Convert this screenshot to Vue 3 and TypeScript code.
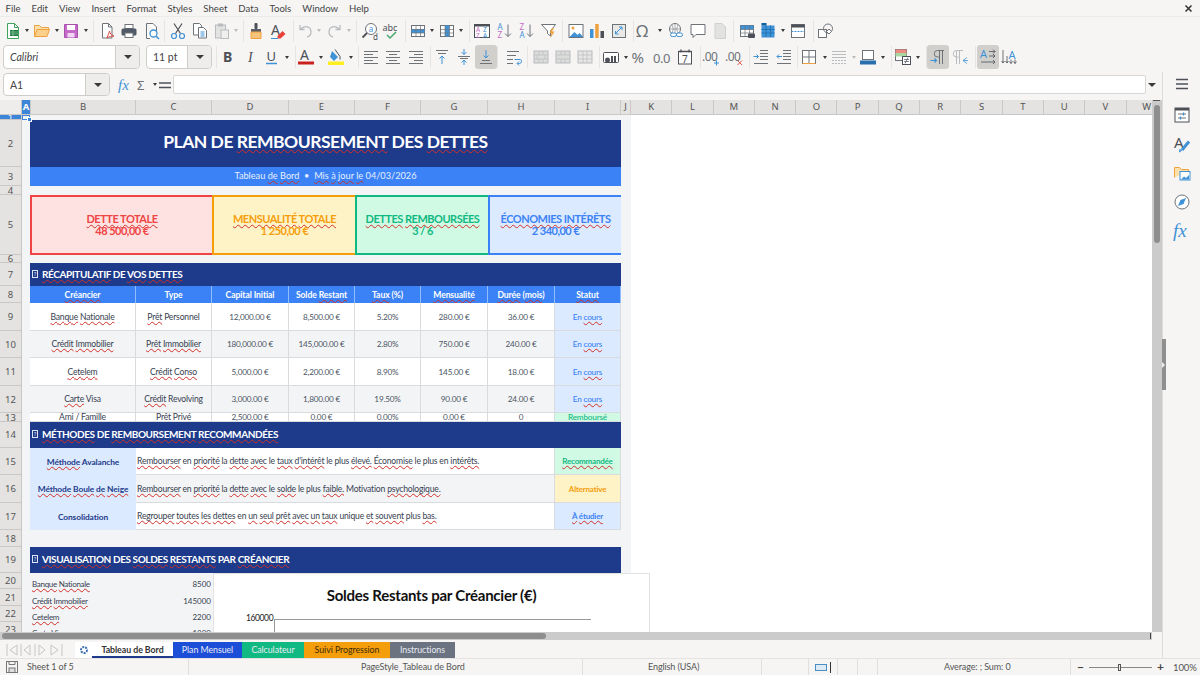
<script setup lang="ts">
// LibreOffice Calc window: toolbars are data, icon art lives in one map
interface BarItem {
  x: number
  k?: 'a' | 's' | 'box'
  ic?: string
  on?: boolean
  off?: boolean
  w?: number
  text?: string
  italic?: boolean
}

interface Cell {
  col: number
  span?: number
  text: string
  cls: string
}

const G = '#6e7378'
const B = '#3f92d6'
const O = '#eea23f'
const D = '#4d5157'
const L = '#b9bcbf'
const T = (s: string, x: number, y: number, size: number, fill: string, extra = '') =>
  `<text x="${x}" y="${y}" font-size="${size}" fill="${fill}" font-family="Noto Sans" ${extra}>${s}</text>`
const lines = (rows: number[][], c = G) =>
  `<path d="${rows.map(r => `M${r[0]} ${r[2]}H${r[1]}`).join('')}" stroke="${c}" fill="none"/>`
const table = (extra: string) =>
  `<rect x="2.5" y="3.5" width="13" height="11" fill="#fff" stroke="${G}"/>${extra}<path d="M2.5 7.5h13M2.5 11h13M7 3.5v11M11.5 3.5v11" stroke="${G}" stroke-width=".7"/>`

const icons: Record<string, string> = {
  new: `<path d="M3.5 1.5h7l4 4v11h-11z" fill="#fff" stroke="#3ea65c"/><path d="M10.5 1.5v4h4" fill="none" stroke="#3ea65c"/><rect x="6" y="8" width="8" height="6" fill="#1d7b3f"/><path d="M6 10h8M6 12h8M9 8v6" stroke="#a9dcb8" stroke-width=".6"/>`,
  open: `<path d="M1.5 14.5v-11h5l2 2h7v3" fill="#fbe0ac" stroke="${O}"/><path d="M1.5 14.5l2.5-7h12.5l-2.5 7z" fill="#fad08a" stroke="${O}"/>`,
  save: `<path d="M2.5 2.5h13v13h-13z" fill="#c56ac8" stroke="#a94fae"/><rect x="5" y="3" width="8" height="5" fill="#fff"/><rect x="5.5" y="11" width="7" height="4.5" fill="#f2d6f3"/>`,
  pdf: `<path d="M4.5 1.5h6l3.5 3.5v11h-9.500z" fill="#fff" stroke="${G}"/><path d="M10.500 1.500v3.500h3.500" fill="none" stroke="${G}"/><path d="M9 16c1-3 2-5 2.500-7 .5 3 2 4 4.500 5-2 0-5 .5-7 2z" fill="none" stroke="#dc4b42"/>`,
  print: `<rect x="5" y="2.500" width="8" height="4" fill="#fff" stroke="${G}"/><rect x="1.500" y="6.500" width="15" height="7" rx="1.500" fill="#4f5a66"/><rect x="5" y="11" width="8" height="4.500" fill="#fff" stroke="${G}"/>`,
  preview: `<path d="M3.500 1.500h6.500l3.500 3.500v4M7 16.500h-3.500v-15" fill="#fff" stroke="${G}"/><circle cx="10.500" cy="11.500" r="3.500" fill="#fff" stroke="${B}" stroke-width="1.300"/><path d="M13 14l3 3" stroke="${B}" stroke-width="1.500"/>`,
  cut: `<path d="M5 1.500l6.500 10M13 1.500l-6.500 10" stroke="${D}" stroke-width="1.200"/><circle cx="5" cy="14" r="2.500" fill="none" stroke="${B}" stroke-width="1.200"/><circle cx="13" cy="14" r="2.500" fill="none" stroke="${B}" stroke-width="1.200"/>`,
  copy: `<path d="M2.500 1.500h6l2 2v9.500h-8z" fill="#fff" stroke="${G}"/><path d="M7.500 5.500h5l3 3v7.500h-8z" fill="#fff" stroke="${G}"/><path d="M9.500 10h4M9.500 12h4M9.500 14h4" stroke="${B}"/>`,
  paste: `<rect x="2.500" y="3" width="10" height="13" fill="#e3e3e1" stroke="${L}"/><rect x="5" y="1.500" width="5" height="3" fill="${L}"/><rect x="8" y="8" width="7.500" height="8.500" fill="#efefed" stroke="${L}"/>`,
  clone: `<rect x="7.500" y="1" width="3" height="6" rx="1" fill="${D}"/><rect x="4" y="7" width="10" height="3" fill="#5a5f66"/><path d="M4 10h10v6.500h-10z" fill="#f6c37a" stroke="${O}"/>`,
  clear: `${T('A', 2, 13, 14, D)}<path d="M8.500 14l5-5 3 3-5 4.500h-3z" fill="#e8413c"/><path d="M2 16.500h7" stroke="${B}"/>`,
  undo: `<path d="M4 7.500c5-5 11-3 11 2.500 0 3-2 4.500-4 5M4 3v4.500h4.500" fill="none" stroke="${L}" stroke-width="1.300"/>`,
  redo: `<path d="M14 7.500c-5-5-11-3-11 2.500 0 3 2 4.500 4 5M14 3v4.500h-4.500" fill="none" stroke="${L}" stroke-width="1.300"/>`,
  find: `<circle cx="10" cy="7" r="5.500" fill="#fff" stroke="${G}"/><path d="M6 11l-4.500 4.500" stroke="${D}" stroke-width="1.800"/>${T('a', 7.800, 9.500, 8, B)}${T('d', 12, 17.500, 8, D)}`,
  spell: `${T('abc', .5, 9, 9, D)}<path d="M5 13l3 3 6-6" fill="none" stroke="#46a86b" stroke-width="1.500"/>`,
  rows: table(`<rect x="2.500" y="7" width="13" height="4" fill="${B}"/>`),
  cols: table(`<rect x="7" y="3.500" width="4.500" height="11" fill="${B}"/>`),
  sort: `<rect x="1.500" y="2.500" width="15" height="13" fill="#fff" stroke="${D}"/><rect x="1.500" y="2.500" width="15" height="2" fill="${D}"/>${T('A', 3, 10, 6.500, '#c66bc9')}${T('Z', 3, 15.500, 6.500, '#c66bc9')}${T('Z', 10, 10, 6.500, B)}${T('A', 10, 15.500, 6.500, B)}`,
  az: `${T('A', 1.500, 8, 8, B)}${T('Z', 1.500, 16, 8, '#c66bc9')}<path d="M12 2.500v12M9 11.500l3 3 3-3" fill="none" stroke="${G}"/>`,
  za: `${T('Z', 1.500, 8, 8, '#c66bc9')}${T('A', 1.500, 16, 8, B)}<path d="M12 2.500v12M9 11.500l3 3 3-3" fill="none" stroke="${G}"/>`,
  filter: `<path d="M1.500 2.500h14l-5 6.500v5l-3-2.500v-2.500z" fill="#fff" stroke="${G}"/><path d="M12 6l-2.500 5h2l-1 5 4-6.500h-2.500l2-3.500z" fill="${O}"/>`,
  image: `<rect x="2" y="2.500" width="14" height="13" fill="#fff" stroke="${G}"/><circle cx="6" cy="6" r="1.500" fill="${O}"/><path d="M2.500 15l5-5 3 3 2-2 3 3v1h-13z" fill="${B}"/>`,
  chart: `<rect x="2" y="7" width="3.500" height="9" fill="${B}"/><rect x="7.200" y="2" width="3.500" height="14" fill="${O}"/><rect x="12.500" y="9" width="3.500" height="7" fill="${D}"/>`,
  pivot: `<rect x="2.500" y="2.500" width="13" height="13" fill="#e8e8e6" stroke="${G}"/><path d="M5 12l7-7M9 5h3v3M5.500 9v3h3" fill="none" stroke="${B}"/>`,
  omega: T('Ω', 0, 15, 17, G),
  link: `<circle cx="8" cy="7" r="5.500" fill="#fff" stroke="${G}"/><path d="M2.500 7h11M8 1.500v11M5 3c1.500 2.500 1.500 5.500 0 8M11 3c-1.500 2.500-1.500 5.500 0 8" fill="none" stroke="${G}" stroke-width=".6"/><rect x="3.500" y="11" width="6" height="3.500" rx="1.700" fill="#fff" stroke="${B}"/><rect x="9.500" y="11" width="6" height="3.500" rx="1.700" fill="#fff" stroke="${B}"/>`,
  comment: `<path d="M2 2.500h14v10h-9l-3 3v-3h-2z" fill="#fff" stroke="${G}"/>`,
  hdr: `<path d="M4 1.500h7l3.500 3.500v11.500h-10.500z" fill="#e2e2e0" stroke="#d0d0ce"/>`,
  prange: `${table(`<rect x="2.500" y="3.500" width="13" height="4" fill="${B}"/>`)}<rect x="10" y="11.500" width="7" height="4.500" rx="1" fill="${D}"/>`,
  named: `<rect x="2.500" y="3.500" width="13" height="12" fill="${B}"/><path d="M2.500 7.500h13M2.500 11h13M7 3.500v12M11.500 3.500v12" stroke="#0f5f9d" stroke-dasharray="1 1"/><rect x="2.500" y="1" width="5" height="2.500" fill="#0f5f9d"/>`,
  freeze: `<rect x="2.500" y="2.500" width="13" height="13" fill="#fff" stroke="${G}"/><rect x="2.500" y="2.500" width="13" height="3" fill="${D}"/><path d="M2.500 9.500h13" stroke="${B}" stroke-dasharray="2 1"/>`,
  shapes: `<rect x="1.500" y="7.500" width="8" height="8" fill="#fff" stroke="${G}"/><circle cx="11" cy="6.500" r="4.500" fill="none" stroke="${G}"/><path d="M12 7l2.500 2.500-2.500 2.500-2.500-2.500z" fill="#fff" stroke="${G}"/>`,
  bold: T('B', 4, 14, 14, D, 'font-weight="700"'),
  ital: `<text x="6" y="14" font-size="14" fill="${D}" font-family="Liberation Serif" font-style="italic">I</text>`,
  under: `${T('U', 3.500, 12.500, 13, D)}<path d="M3 15.500h11" stroke="${B}" stroke-width="1.500"/>`,
  color: `${T('A', 3, 12, 14, D)}<rect x="1" y="13.500" width="16" height="3" fill="#c9211e"/>`,
  bg: `<path d="M5 3l6 6-4 4-4-4z" fill="${B}"/><path d="M8 1.500l5 7v3" fill="none" stroke="${D}"/><rect x="1" y="13.500" width="16" height="3.500" fill="#ffee22"/>`,
  left: lines([[2, 16, 3.500], [2, 11, 6.500], [2, 16, 9.500], [2, 11, 12.500], [2, 16, 15.500]]),
  center: lines([[2, 16, 3.500], [5, 13, 6.500], [2, 16, 9.500], [5, 13, 12.500], [2, 16, 15.500]]),
  right: lines([[2, 16, 3.500], [7, 16, 6.500], [2, 16, 9.500], [7, 16, 12.500], [2, 16, 15.500]]),
  vtop: `${lines([[3, 15, 2.500], [5, 13, 5.500]])}<path d="M9 16v-8M6.500 10.500l2.500-2.500 2.500 2.500" fill="none" stroke="${B}"/>`,
  vmid: `${lines([[3, 15, 8.500], [5, 13, 10.500]])}<path d="M9 1v5.500M6.500 4l2.500 2.500 2.500-2.500M9 17v-5M6.500 14.500l2.500-2.500 2.500 2.500" fill="none" stroke="${B}"/>`,
  vbot: `${lines([[5, 13, 12.500], [3, 15, 15.500]])}<path d="M9 2v8M6.500 7.500l2.500 2.500 2.500-2.500" fill="none" stroke="${B}"/>`,
  wrap: `${lines([[2, 14, 3.500], [2, 11, 7.500], [2, 8, 11.500], [2, 8, 15.500]])}<path d="M9.500 11.500h6c1.500 0 1.500 4-1 4h-2M14 13.500l-2 2 2 2" fill="none" stroke="${B}"/>`,
  merge: `<rect x="2" y="3" width="14" height="12" fill="#dcdcda" stroke="${L}"/><path d="M2 7h14M2 11h14M7 3v4M11 3v4M5 7v4M13 7v4M7 11v4M11 11v4" stroke="${L}" stroke-width=".7"/>`,
  merge2: `<rect x="2" y="3" width="14" height="12" fill="#dcdcda" stroke="${L}"/><path d="M2 7h14M2 11h14M7 3v4M11 3v4M7 11v4M11 11v4" stroke="${L}" stroke-width=".7"/>`,
  merge3: `<rect x="2" y="3" width="14" height="12" fill="#e6e6e4" stroke="${L}"/><path d="M2 7h14M2 11h14M7 3v12M11 3v12" stroke="${L}" stroke-width=".7"/>`,
  money: `<rect x="1.500" y="4.500" width="15" height="10" rx="1" fill="#fff" stroke="${D}"/><circle cx="5.500" cy="12" r="2.500" fill="${D}"/><rect x="9" y="8" width="2" height="6" fill="${D}"/><rect x="12" y="8" width="2" height="6" fill="${D}"/>`,
  pct: T('%', -.5, 14.500, 15, G),
  num: T('0.0', -1, 14.500, 13, G, 'letter-spacing="-.5"'),
  date: `<rect x="2.500" y="3.500" width="13" height="12.500" fill="#fff" stroke="${D}"/><path d="M2.500 3.500h13M5 1.500v3M13 1.500v3" stroke="${D}" stroke-width="1.300"/>${T('7', 6, 14.500, 10, D)}`,
  adddec: `${T('.00', -1, 13, 12, G, 'letter-spacing="-.5"')}<path d="M13.500 12.500v5M11 15h5" stroke="${B}"/>`,
  deldec: `${T('.00', -1, 13, 12, G, 'letter-spacing="-.5"')}<path d="M11.500 12.500l4.500 4.500M16 12.500l-4.500 4.500" stroke="#e2574c"/>`,
  indent: `${lines([[8, 16, 2.500], [8, 16, 5.500], [8, 16, 8.500], [8, 16, 11.500], [2, 16, 15.500]])}<path d="M1.500 8.500h5M4.500 6.500l2 2-2 2" fill="none" stroke="${B}"/>`,
  outdent: `${lines([[8, 16, 2.500], [8, 16, 5.500], [8, 16, 8.500], [8, 16, 11.500], [2, 16, 15.500]])}<path d="M7 8.500h-5M4 6.500l-2 2 2 2" fill="none" stroke="${B}"/>`,
  borders: `<rect x="2.500" y="2.500" width="13" height="13" fill="#fff" stroke="${G}"/><path d="M9 2.500v13M2.500 9h13" stroke="${G}"/><path d="M2.500 15.500h13" stroke="${O}"/>`,
  lstyle: `<path d="M2 3.500h14M2 6.500h14M2 9.500h14" stroke="${L}"/><path d="M2 12.500h14M2 15.500h14" stroke="${L}" stroke-dasharray="2 1"/>`,
  bcolor: `<rect x="3.500" y="2.500" width="11" height="9" fill="#fff" stroke="${G}"/><rect x="1" y="12.500" width="16" height="4" fill="#2a6fad"/>`,
  cond: `<rect x="1.500" y="1.500" width="11" height="11" fill="#fff" stroke="${G}"/><rect x="1.500" y="1.500" width="11" height="3.500" fill="#ef8a80"/><rect x="1.500" y="5" width="11" height="3.500" fill="#a8d8a0"/><rect x="8.500" y="8.500" width="8" height="8" fill="#fff" stroke="${D}"/><path d="M10 11.500h5M10 13.500h5M11 15.500l3-6" stroke="${D}" stroke-width=".7"/>`,
  ltr: `<path d="M10.500 16v-13M13.500 16v-13M15 2.500h-6.500a3.200 3.200 0 0 0 0 6.500h2" fill="none" stroke="${G}"/><path d="M1.500 12.500h6M5.500 10.500l2 2-2 2" fill="none" stroke="${B}" stroke-width="1.200"/>`,
  rtl: `<path d="M5.500 16v-13M8.500 16v-13M12 2.500h-6.500a3.200 3.200 0 0 0 0 6.500h2" fill="none" stroke="${L}"/><path d="M12 12.500l4-3M12 12.500l4 3M12 12.500h5" fill="none" stroke="${B}" stroke-width=".8"/>`,
  horiz: `${T('A', 1, 10, 11, B)}<path d="M10 3.500h6M14 1.500l2 2-2 2M10 8h6M14 6l2 2-2 2M2 14h14M14 12l2 2-2 2" fill="none" stroke="${D}" stroke-width=".8"/>`,
  vert: `${T('A', 8.500, 10.500, 11, B)}<path d="M3 2v13M1.500 13l1.500 2 1.500-2M7 8v7M5.500 13l1.500 2 1.500-2M11 11.500v4M9.500 13.500l1.500 2 1.500-2M15 11.500v4M13.500 13.500l1.500 2 1.500-2" fill="none" stroke="${D}" stroke-width=".8"/>`,
  props: `<rect x="2" y="2" width="14" height="14" fill="#fff" stroke="${D}"/><rect x="2" y="2" width="14" height="2.500" fill="${D}"/><path d="M5 8h8M5 12h8" stroke="${G}"/><path d="M10.500 6.500v3M7.500 10.500v3" stroke="${B}" stroke-width="1.300"/>`,
  styles: `${T('A', 1, 13, 15, D)}<path d="M9 15l7-8.500" stroke="${B}" stroke-width="3"/><path d="M9 15l-2.500 2 .5-3" fill="#8fc1e8" stroke="${B}"/>`,
  gallery: `<path d="M1.500 13.500v-10h5l2 2h7v2" fill="#fbe0ac" stroke="${O}"/><rect x="7" y="7.500" width="10" height="8.500" fill="#fff" stroke="${B}"/><path d="M8 15.500l3-3 2 1.500 3-3v4.500z" fill="${B}"/>`,
  navig: `<circle cx="9" cy="9" r="7" fill="#fff" stroke="${G}"/><path d="M13 5l-2.500 6-5.500 2 2.500-6z" fill="${B}"/>`,
  fx: `<text x="1" y="14" font-size="15" fill="${B}" font-family="Liberation Serif" font-style="italic">fx</text>`,
  fxbig: `<text x="0" y="15" font-size="19" fill="${B}" font-family="Liberation Serif" font-style="italic">fx</text>`,
  sigma: T('Σ', 3, 14, 13, G),
  eq: `<path d="M3 7h12M3 11.500h12" stroke="${D}" stroke-width="1.500"/>`,
  burger: `<path d="M3 4.500h12M3 9h12M3 13.500h12" stroke="${D}" stroke-width="1.400"/>`,
  floppy: `<rect x="1.500" y="1.500" width="11" height="11" fill="none" stroke="#777"/><rect x="4" y="8" width="6" height="4.500" fill="#ddd" stroke="#777"/><path d="M4 1.500v3h6v-3" fill="none" stroke="#777"/>`
}

const bar = (items: BarItem[]) => {
  let end = 0
  return items.map(it => {
    const w = it.w ?? (it.k === 'a' ? 7 : it.k === 's' ? 1 : 22)
    const ml = it.x - w / 2 - end
    end = it.x + w / 2
    return { ...it, style: { width: `${w}px`, marginLeft: `${ml}px` } }
  })
}

const menu = ['File', 'Edit', 'View', 'Insert', 'Format', 'Styles', 'Sheet', 'Data', 'Tools', 'Window', 'Help']

const bar1 = bar([
  { x: 13, ic: 'new' }, { x: 27, k: 'a' }, { x: 42, ic: 'open' }, { x: 57, k: 'a' }, { x: 71, ic: 'save' }, { x: 86, k: 'a' }, { x: 93, k: 's' },
  { x: 107, ic: 'pdf' }, { x: 129, ic: 'print' }, { x: 152, ic: 'preview' }, { x: 164, k: 's' },
  { x: 178, ic: 'cut' }, { x: 200, ic: 'copy' }, { x: 222, ic: 'paste' }, { x: 236, k: 'a', off: true }, { x: 243, k: 's' },
  { x: 256, ic: 'clone' }, { x: 278, ic: 'clear' }, { x: 293, k: 's' },
  { x: 305, ic: 'undo' }, { x: 319, k: 'a', off: true }, { x: 335, ic: 'redo' }, { x: 349, k: 'a', off: true }, { x: 356, k: 's' },
  { x: 370, ic: 'find' }, { x: 391, ic: 'spell' }, { x: 405, k: 's' },
  { x: 418, ic: 'rows' }, { x: 432, k: 'a' }, { x: 447, ic: 'cols' }, { x: 461, k: 'a' }, { x: 469, k: 's' },
  { x: 482, ic: 'sort' }, { x: 505, ic: 'az' }, { x: 527, ic: 'za' }, { x: 549, ic: 'filter' }, { x: 562, k: 's' },
  { x: 576, ic: 'image' }, { x: 597, ic: 'chart' }, { x: 619, ic: 'pivot' }, { x: 633, k: 's' },
  { x: 645, ic: 'omega' }, { x: 660, k: 'a' }, { x: 676, ic: 'link' }, { x: 698, ic: 'comment' }, { x: 720, ic: 'hdr' }, { x: 733, k: 's' },
  { x: 747, ic: 'prange' }, { x: 768, ic: 'named' }, { x: 783, k: 'a' }, { x: 798, ic: 'freeze' }, { x: 813, k: 's' },
  { x: 826, ic: 'shapes' }
])

const bar2 = bar([
  { x: 71.5, k: 'box', w: 137, text: 'Calibri', italic: true }, { x: 179, k: 'box', w: 66, text: '11 pt' }, { x: 216, k: 's' },
  { x: 228, ic: 'bold' }, { x: 251, ic: 'ital' }, { x: 272, ic: 'under' }, { x: 287, k: 'a' }, { x: 295, k: 's' },
  { x: 306, ic: 'color' }, { x: 321, k: 'a' }, { x: 336, ic: 'bg' }, { x: 351, k: 'a' }, { x: 358, k: 's' },
  { x: 371, ic: 'left' }, { x: 393, ic: 'center' }, { x: 416, ic: 'right' }, { x: 430, k: 's' },
  { x: 442, ic: 'vtop' }, { x: 464, ic: 'vmid' }, { x: 486, ic: 'vbot', on: true }, { x: 497.5, k: 's' },
  { x: 514, ic: 'wrap' }, { x: 527, k: 's' },
  { x: 541, ic: 'merge' }, { x: 563, ic: 'merge2' }, { x: 585, ic: 'merge3' }, { x: 599, k: 's' },
  { x: 611, ic: 'money' }, { x: 626, k: 'a' }, { x: 641, ic: 'pct' }, { x: 663, ic: 'num' }, { x: 685, ic: 'date' }, { x: 700, k: 's' },
  { x: 712, ic: 'adddec' }, { x: 735, ic: 'deldec' }, { x: 749, k: 's' },
  { x: 761, ic: 'indent' }, { x: 784, ic: 'outdent' }, { x: 797, k: 's' },
  { x: 809, ic: 'borders' }, { x: 825, k: 'a' }, { x: 839, ic: 'lstyle' }, { x: 854, k: 'a', off: true }, { x: 868, ic: 'bcolor' }, { x: 883, k: 'a' }, { x: 891, k: 's' },
  { x: 903, ic: 'cond' }, { x: 918, k: 'a' }, { x: 926, k: 's' },
  { x: 938, ic: 'ltr', on: true }, { x: 960, ic: 'rtl' }, { x: 975, k: 's' },
  { x: 988, ic: 'horiz', on: true }, { x: 1009, ic: 'vert' }
])

// column letters with the sheet's real widths
const cols: [string, number][] = [
  ['A', 9], ['B', 105], ['C', 76], ['D', 77], ['E', 66], ['F', 66], ['G', 67], ['H', 67], ['I', 66], ['J', 10],
  ['K', 41.3], ['L', 41.3], ['M', 41.3], ['N', 41.3], ['O', 41.3], ['P', 41.3], ['Q', 41.3], ['R', 41.3], ['S', 41.3], ['T', 41.3], ['U', 41.3], ['V', 41.3], ['W', 41.3]
]

const rowHeights = [5, 47, 19, 9, 60, 8, 23, 17, 28, 27, 28, 27, 9, 26, 27, 28, 27, 17, 26, 16, 17, 16, 16]

// ~word~ = word the spell checker flags
const parts = (s: string) =>
  s.split(/(~[^~]+~)/).filter(Boolean).map(p => ({ t: p.replace(/~/g, ''), bad: p.startsWith('~') }))

const R = (row: number, c: Cell) => ({ ...c, row })
const cells: (Cell & { row: number })[] = [
  R(2, { col: 3, span: 8, text: 'PLAN DE ~REMBOURSEMENT~ DES ~DETTES~', cls: 'title' }),
  R(3, { col: 3, span: 8, text: 'Tableau ~de~ ~Bord~  •  ~Mis~ ~à~ ~jour~ ~le~ 04/03/2026', cls: 'sub' }),
  R(5, { col: 3, span: 2, text: '~DETTE~ ~TOTALE~|48 500,00 €', cls: 'kpi red' }),
  R(5, { col: 5, span: 2, text: '~MENSUALITÉ~ ~TOTALE~|1 250,00 €', cls: 'kpi amber' }),
  R(5, { col: 7, span: 2, text: '~DETTES~ ~REMBOURSÉES~|3 / 6', cls: 'kpi green' }),
  R(5, { col: 9, span: 2, text: '~ÉCONOMIES~ ~INTÉRÊTS~|2 340,00 €', cls: 'kpi blue' }),
  R(7, { col: 3, span: 8, text: '~RÉCAPITULATIF~ DE ~VOS~ ~DETTES~', cls: 'section' }),
  R(14, { col: 3, span: 8, text: '~MÉTHODES~ DE ~REMBOURSEMENT~ ~RECOMMANDÉES~', cls: 'section' }),
  R(19, { col: 3, span: 8, text: '~VISUALISATION~ DES ~SOLDES~ ~RESTANTS~ PAR ~CRÉANCIER~', cls: 'section' })
]

const heads = ['~Créancier~', 'Type', 'Capital Initial', 'Solde ~Restant~', '~Taux~ (%)', '~Mensualité~', '~Durée~ (~mois~)', '~Statut~']
heads.forEach((text, i) => cells.push(R(8, { col: 3 + i, text, cls: 'head' })))

const debts = [
  ['~Banque~ ~Nationale~', '~Prêt~ Personnel', '12,000.00 €', '8,500.00 €', '5.20%', '280.00 €', '36.00 €', 'En ~cours~'],
  ['~Crédit~ ~Immobilier~', '~Prêt~ ~Immobilier~', '180,000.00 €', '145,000.00 €', '2.80%', '750.00 €', '240.00 €', 'En ~cours~'],
  ['~Cetelem~', '~Crédit~ ~Conso~', '5,000.00 €', '2,200.00 €', '8.90%', '145.00 €', '18.00 €', 'En ~cours~'],
  ['~Carte~ Visa', '~Crédit~ Revolving', '3,000.00 €', '1,800.00 €', '19.50%', '90.00 €', '24.00 €', 'En ~cours~'],
  ['Ami / ~Famille~', '~Prêt~ ~Privé~', '2,500.00 €', '0.00 €', '0.00%', '0.00 €', '0', '~Remboursé~']
]
debts.forEach((row, r) => {
  row.forEach((text, i) => {
    const stat = i === 7 ? (r === 4 ? ' st-green' : ' st-blue') : ''
    cells.push(R(9 + r, { col: 3 + i, text, cls: `td${r % 2 ? ' alt' : ''}${i > 1 ? ' num' : ''}${stat}` }))
  })
})

const methods = [
  ['~Méthode~ Avalanche', '~Rembourser~ en ~priorité~ la ~dette~ ~avec~ le ~taux~ ~d\'intérêt~ le plus ~élevé.~ ~Économise~ le plus en ~intérêts.~', '~Recommandée~', 'st-green'],
  ['~Méthode~ ~Boule~ ~de~ ~Neige~', '~Rembourser~ en ~priorité~ la ~dette~ ~avec~ le ~solde~ le plus ~faible.~ Motivation ~psychologique.~', 'Alternative', 'st-amber'],
  ['Consolidation', '~Regrouper~ ~toutes~ ~les~ ~dettes~ en ~un~ ~seul~ ~prêt~ ~avec~ ~un~ ~taux~ unique ~et~ ~souvent~ plus ~bas.~', '~À~ ~étudier~', 'st-blue']
]
methods.forEach((m, r) => {
  const alt = r === 1 ? ' alt' : ''
  cells.push(R(15 + r, { col: 3, text: m[0], cls: 'method' }))
  cells.push(R(15 + r, { col: 4, span: 6, text: m[1], cls: `desc td${alt}` }))
  cells.push(R(15 + r, { col: 10, text: m[2], cls: `td strong ${m[3]}` }))
})

const balances = [['~Banque~ ~Nationale~', '8500'], ['~Crédit~ ~Immobilier~', '145000'], ['~Cetelem~', '2200'], ['~Carte~ Visa', '1800']]
balances.forEach((b, r) => {
  cells.push(R(20 + r, { col: 3, text: b[0], cls: 'plain' }))
  cells.push(R(20 + r, { col: 4, text: b[1], cls: 'plain right' }))
})

const tabs = [
  { name: 'Tableau de Bord', cls: 'current', w: 81 },
  { name: 'Plan Mensuel', cls: 'plan', w: 69 },
  { name: 'Calculateur', cls: 'calc', w: 62 },
  { name: 'Suivi Progression', cls: 'suivi', w: 86 },
  { name: 'Instructions', cls: 'instr', w: 65 }
]

const deck = ['props', 'styles', 'gallery', 'navig', 'fxbig']
</script>

<template>
  <div class="app">
    <div class="menubar">
      <span v-for="m in menu" :key="m">{{ m }}</span>
      <svg class="close" width="9" height="9" viewBox="0 0 9 9"><path d="M1.500 1.500l6 6M7.500 1.500l-6 6" stroke="#333" stroke-width="1.500" /></svg>
    </div>

    <div v-for="(items, n) in [bar1, bar2]" :key="n" class="bar" :class="n ? 'bar-two' : 'bar-one'">
      <template v-for="it in items" :key="it.x">
        <div v-if="it.k === 'box'" class="combo" :style="it.style">
          <span class="combo-text" :class="{ italic: it.italic }">{{ it.text }}</span>
          <span class="combo-btn"><i class="tri" /></span>
        </div>
        <span v-else-if="it.k === 's'" class="sep" :style="it.style" />
        <span v-else-if="it.k === 'a'" class="arrow" :style="it.style"><i class="tri small" :class="{ off: it.off }" /></span>
        <span v-else class="tool" :class="{ on: it.on }" :style="it.style">
          <svg width="18" height="18" viewBox="0 0 18 18" v-html="icons[it.ic!]" />
        </span>
      </template>
    </div>

    <div class="workspace">
      <div class="doc">
        <div class="formula">
          <div class="combo namebox">
            <span class="combo-text">A1</span>
            <span class="combo-btn"><i class="tri" /></span>
          </div>
          <span class="sep fsep" />
          <svg class="f-ic" width="18" height="18" viewBox="0 0 18 18" v-html="icons.fx" />
          <svg class="f-ic sig" width="18" height="18" viewBox="0 0 18 18" v-html="icons.sigma" />
          <i class="tri small f-tri" />
          <svg class="f-ic eq" width="18" height="18" viewBox="0 0 18 18" v-html="icons.eq" />
          <div class="finput" />
          <i class="tri f-drop" />
        </div>

        <div class="sheetrow">
          <div class="sheet">
            <div class="grid">
              <div class="colhead corner" />
              <div class="colstrip">
                <div v-for="c in cols" :key="c[0]" class="colhead" :class="{ sel: c[0] === 'A' }" :style="{ width: c[1] + 'px' }">{{ c[0] }}</div>
              </div>
              <div
                v-for="(h, i) in rowHeights"
                :key="i"
                class="rowhead"
                :class="{ sel: i === 0 }"
                :style="{ gridRow: i + 2 }"
              >{{ i + 1 }}</div>
              <div
                v-for="(c, i) in cells"
                :key="i"
                class="cell"
                :class="c.cls"
                :style="{ gridRow: c.row + 1, gridColumn: `${c.col} / span ${c.span ?? 1}` }"
              >
                <span v-if="c.cls === 'section'" class="tofu">?</span>
                <span v-for="(line, j) in c.text.split('|')" :key="j" class="line">
                  <span v-for="(p, k) in parts(line)" :key="k" :class="{ bad: p.bad }">{{ p.t }}</span>
                </span>
              </div>
              <div class="cursor"><i /></div>
            </div>

            <!-- chart floats over the cells -->
            <div class="chart">
              <div class="chart-title">Soldes Restants par Créancier (€)</div>
              <div class="chart-plot">
                <span class="chart-tick">160000</span>
                <div class="chart-area" />
              </div>
            </div>
          </div>
          <div class="vscroll"><i class="vtop" /><i class="vthumb" /></div>
        </div>

        <div class="hscroll"><i class="hthumb" /><i class="hend" /></div>

        <div class="tabs">
          <div class="tabnav">
            <svg width="60" height="14" viewBox="0 0 60 14" fill="none" stroke="#c5c5c3">
              <path d="M2 1v12M12 2l-7 5 7 5zM25 2l-6 5 6 5zM16 1v12M30 1v12M34 2l6 5-6 5zM46 2l7 5-7 5zM57 1v12" />
            </svg>
          </div>
          <div class="addtab"><svg width="10" height="10" viewBox="0 0 10 10"><circle cx="5" cy="5" r="3" fill="none" stroke="#3f6fb0" stroke-width="2" stroke-dasharray="2 1" /></svg></div>
          <div v-for="t in tabs" :key="t.name" class="tab" :class="t.cls" :style="{ width: t.w + 'px' }">{{ t.name }}</div>
        </div>
      </div>

      <aside class="sidebar">
        <svg class="burger" width="18" height="18" viewBox="0 0 18 18" v-html="icons.burger" />
        <svg v-for="d in deck" :key="d" width="18" height="18" viewBox="0 0 18 18" v-html="icons[d]" />
        <div class="handle"><i /></div>
      </aside>
    </div>

    <footer class="status">
      <svg class="st-save" width="14" height="14" viewBox="0 0 14 14" v-html="icons.floppy" />
      <span class="st st-sheet">Sheet 1 of 5</span>
      <span class="st st-page">PageStyle_Tableau de Bord</span>
      <span class="st st-lang">English (USA)</span>
      <span class="st st-blank" />
      <span class="st st-mode"><i class="selrect" /><i class="ibeam" /></span>
      <span class="st st-a" /><span class="st st-b" />
      <span class="st st-sum">Average: ; Sum: 0</span>
      <span class="st st-zoom">
        <b class="zm">−</b><i class="track"><i class="knob" /></i><b class="zm">+</b>
      </span>
      <span class="st-pct">100%</span>
    </footer>
  </div>
</template>

<style>
html,
body {
  margin: 0;
  overflow: hidden;
}
</style>

<style scoped>
.app {
  width: 1200px;
  height: 675px;
  display: flex;
  flex-direction: column;
  overflow: hidden;
  background: #f6f5f4;
  color: #3d3d3d;
  font-family: 'Lato', 'Noto Sans', sans-serif;
  font-size: 10px;
}

svg {
  overflow: visible;
}

.menubar {
  height: 17px;
  display: flex;
  align-items: center;
  gap: 11px;
  padding-left: 5.5px;
  font-size: 9.6px;
  color: #444;
  position: relative;
  border-bottom: 1px solid #ebebe9;
  box-sizing: border-box;
}

.close {
  margin-left: auto;
  margin-right: 7px;
}

.bar {
  display: flex;
  align-items: center;
}

.bar-one {
  height: 27px;
}

.bar-two {
  height: 28px;
  padding-bottom: 2px;
  box-sizing: border-box;
}

.tool {
  height: 24px;
  display: flex;
  align-items: center;
  justify-content: center;
  flex-shrink: 0;
  border-radius: 3px;
}

.tool.on {
  background: #d1cfcc;
}

.arrow {
  display: flex;
  align-items: center;
  justify-content: center;
  flex-shrink: 0;
}

.tri {
  display: block;
  width: 0;
  height: 0;
  border-left: 4px solid transparent;
  border-right: 4px solid transparent;
  border-top: 4px solid #3a3a3a;
}

.tri.small {
  border-left-width: 2.5px;
  border-right-width: 2.5px;
  border-top-width: 3px;
}

.tri.off {
  border-top-color: #bcbcbc;
}

.sep {
  height: 22px;
  background: #e6e5e3;
  flex-shrink: 0;
}

.combo {
  height: 24px;
  box-sizing: border-box;
  border: 1px solid #cfcdca;
  border-radius: 4px;
  background: #fff;
  display: flex;
  flex-shrink: 0;
  overflow: hidden;
  font-size: 10.5px;
}

.combo-text {
  flex: 1;
  padding-left: 6px;
  line-height: 22px;
  color: #444;
}

.combo-text.italic {
  font-style: italic;
}

.combo-btn {
  width: 23px;
  background: #eeedeb;
  border-left: 1px solid #cfcdca;
  display: flex;
  align-items: center;
  justify-content: center;
}

.workspace {
  flex: 1;
  min-height: 0;
  display: flex;
}

.doc {
  width: 1162px;
  display: flex;
  flex-direction: column;
}

.formula {
  height: 28px;
  box-sizing: border-box;
  padding-bottom: 3px;
  display: flex;
  align-items: center;
}

.namebox {
  width: 107px;
  margin-left: 3px;
  height: 23px;
}

.fsep {
  margin-left: 3px;
  height: 20px;
}

.f-ic {
  margin-left: 4px;
  flex-shrink: 0;
}

.f-ic.sig {
  margin-left: -1px;
}

.f-tri {
  margin-left: 1px;
}

.f-ic.eq {
  margin-left: -1px;
}

.finput {
  flex: 1;
  height: 17px;
  background: #fff;
  border: 1px solid #d8d7d5;
  border-radius: 2px;
  margin-left: -1px;
}

.f-drop {
  margin: 0 6px 0 2px;
}

.sheetrow {
  height: 532px;
  display: flex;
}

.sheet {
  flex: 1;
  position: relative;
  overflow: hidden;
  background: #fff;
}

.grid {
  display: grid;
  grid-template-columns: 22px 8px 106px 76px 77px 66px 66px 67px 67px 66px 10px 1fr;
  grid-template-rows: 15px 5px 47px 19px 9px 60px 8px 23px 17px 28px 27px 28px 27px 9px 26px 27px 28px 27px 17px 26px 16px 17px 16px 16px;
  background: linear-gradient(to right, #f3f4f6 631px, #fff 631px);
  position: relative;
}

.colstrip {
  grid-column: 2 / -1;
  grid-row: 1;
  display: flex;
  overflow: hidden;
}

.colhead {
  box-sizing: border-box;
  flex-shrink: 0;
  height: 15px;
  background: #e4e3e1;
  border-right: 1px solid #c9c8c6;
  border-bottom: 1px solid #c9c8c6;
  text-align: center;
  font-family: 'Noto Sans', sans-serif;
  font-size: 9.5px;
  line-height: 14px;
  color: #555;
}

.colhead.corner {
  grid-column: 1;
  grid-row: 1;
  background: #eeedeb;
}

.colhead.sel {
  background: #3d85d8;
  color: #fff;
  font-weight: 700;
}

.rowhead {
  grid-column: 1;
  box-sizing: border-box;
  overflow: hidden;
  background: #e4e3e1;
  border-right: 1px solid #c9c8c6;
  border-bottom: 1px solid #c9c8c6;
  display: flex;
  align-items: center;
  justify-content: center;
  font-family: 'Noto Sans', sans-serif;
  font-size: 9.5px;
  color: #555;
}

.rowhead.sel {
  background: #3d85d8;
  color: #fff;
}

.cell {
  box-sizing: border-box;
  min-width: 0;
  overflow: hidden;
  display: flex;
  align-items: center;
  justify-content: center;
  white-space: pre;
  color: #374151;
}

.bad {
  text-decoration: underline wavy #d0302a 1px;
  text-underline-offset: 1px;
  text-decoration-skip-ink: none;
}

.line {
  display: block;
}

.title {
  background: #1e3a8a;
  color: #fff;
  font-size: 17.5px;
  letter-spacing: -0.5px;
  font-weight: 700;
  padding-bottom: 4px;
}

.sub {
  background: #3b82f6;
  color: #e6effe;
  font-size: 9.2px;
  padding-bottom: 2px;
}

.kpi {
  flex-direction: column;
  font-size: 11px;
  letter-spacing: -0.5px;
  font-weight: 700;
  line-height: 12px;
  border-style: solid;
  border-width: 2px 0 2px 2px;
}

.kpi.red {
  background: #fee2e2;
  border-color: #ef4444;
  color: #ef4444;
}

.kpi.amber {
  background: #fef3c7;
  border-color: #f59e0b;
  color: #f59e0b;
}

.kpi.green {
  background: #d1fae5;
  border-color: #10b981;
  color: #10b981;
}

.kpi.blue {
  background: #dbeafe;
  border-color: #3b82f6;
  color: #3b82f6;
}

.section {
  background: #1e3a8a;
  color: #fff;
  font-size: 10px;
  letter-spacing: -0.4px;
  font-weight: 700;
  justify-content: flex-start;
  padding: 0 0 2px 2px;
}

.tofu {
  box-sizing: border-box;
  width: 6px;
  height: 8px;
  margin-right: 4px;
  border: 1px solid #dfe6f5;
  font-size: 5px;
  line-height: 6px;
  text-align: center;
  font-family: 'Noto Sans', sans-serif;
  font-weight: 400;
  letter-spacing: 0;
}

.head {
  background: #3b82f6;
  color: #fff;
  font-size: 8.6px;
  letter-spacing: -0.1px;
  font-weight: 700;
  border-right: 1px solid #93bdfa;
}

.td {
  background: #fff;
  font-size: 8.6px;
  letter-spacing: -0.2px;
  border-right: 1px solid #d9dbdf;
  border-bottom: 1px solid #d9dbdf;
}

.td.alt {
  background: #f3f4f6;
}

.td.num {
  color: #4b5563;
  font-size: 8.2px;
}

.td.st-blue {
  background: #dbeafe;
  color: #3b82f6;
  font-weight: 500;
}

.td.st-green {
  background: #d1fae5;
  color: #10b981;
  font-weight: 500;
}

.td.st-amber {
  background: #fef3c7;
  color: #f59e0b;
}

.td.strong {
  font-size: 8px;
  font-weight: 700;
}

.method {
  background: #dbeafe;
  color: #1e3a8a;
  font-size: 8.4px;
  letter-spacing: -0.1px;
  font-weight: 700;
}

.desc {
  justify-content: flex-start;
  padding-left: 1px;
}

.plain {
  font-size: 8px;
  letter-spacing: -0.3px;
  justify-content: flex-start;
  align-items: flex-end;
  overflow: visible;
  padding-left: 2px;
}

.plain.right {
  justify-content: flex-end;
  letter-spacing: 0;
  padding-right: 1px;
}

.cursor {
  grid-column: 2;
  grid-row: 2;
  border: 1px solid #3d85d8;
  box-sizing: border-box;
  position: relative;
}

.cursor i {
  position: absolute;
  right: -3px;
  bottom: -3px;
  width: 3px;
  height: 3px;
  background: #3d85d8;
  border: 1px solid #fff;
}

.chart {
  position: absolute;
  left: 213px;
  top: 473px;
  width: 437px;
  height: 70px;
  box-sizing: border-box;
  background: #fff;
  border: 1px solid #e2e2e2;
  border-bottom: none;
  padding-top: 11px;
}

.chart-title {
  font-size: 15px;
  letter-spacing: -0.25px;
  font-weight: 700;
  color: #111;
  text-align: center;
  line-height: 20px;
}

.chart-plot {
  display: flex;
  margin-top: 10px;
  padding-left: 32px;
}

.chart-tick {
  font-size: 8.5px;
  letter-spacing: -0.4px;
  color: #222;
  line-height: 9px;
  margin-top: -1px;
  margin-right: 1px;
}

.chart-area {
  width: 316px;
  height: 40px;
  border-top: 1px solid #999;
  border-left: 1px solid #999;
  margin-top: 4px;
}

.vscroll {
  width: 10px;
  background: #cbcbcb;
  position: relative;
}

.vtop {
  position: absolute;
  left: 1px;
  top: 0;
  width: 7px;
  height: 1px;
  background: #555;
}

.vthumb {
  position: absolute;
  left: 1.5px;
  top: 5px;
  width: 6px;
  height: 138px;
  border-radius: 3px;
  background: #8e8e8e;
}

.hscroll {
  height: 8px;
  width: 1152px;
  background: #cbcbcb;
  position: relative;
}

.hthumb {
  position: absolute;
  left: 2px;
  top: 1px;
  width: 544px;
  height: 6px;
  border-radius: 3px;
  background: #8e8e8e;
}

.hend {
  position: absolute;
  right: 1px;
  top: 1px;
  width: 1px;
  height: 6px;
  background: #444;
}

.tabs {
  height: 16px;
  margin-top: 2px;
  display: flex;
  font-size: 8.8px;
  letter-spacing: -0.05px;
}

.tabnav {
  width: 75px;
  padding-left: 5px;
  box-sizing: border-box;
  display: flex;
  align-items: center;
}

.addtab {
  width: 17px;
  background: #fff;
  display: flex;
  align-items: center;
  justify-content: center;
}

.tab {
  text-align: center;
  line-height: 15px;
  color: #e8ecf4;
  box-sizing: border-box;
  white-space: nowrap;
}

.tab.current {
  background: #fff;
  color: #333;
  font-weight: 700;
  border-bottom: 2px solid #1e3a8a;
}

.tab.plan {
  background: #1d4ed8;
}

.tab.calc {
  background: #10b981;
}

.tab.suivi {
  background: #f59e0b;
  color: #3b2a08;
}

.tab.instr {
  background: #6b7280;
}

.sidebar {
  width: 38px;
  box-sizing: border-box;
  border-left: 1px solid #dddcda;
  position: relative;
  display: flex;
  flex-direction: column;
  align-items: center;
  gap: 11px;
  padding-top: 3px;
}

.sidebar svg {
  flex-shrink: 0;
}

.burger {
  margin-bottom: 2px;
}

.handle {
  position: absolute;
  left: -1px;
  top: 267px;
  width: 4px;
  height: 51px;
  background: #8f8f8f;
  display: flex;
  align-items: center;
}

.handle i {
  width: 0;
  height: 0;
  border-left: 3px solid #eee;
  border-top: 3px solid transparent;
  border-bottom: 3px solid transparent;
}

.status {
  height: 17px;
  display: flex;
  align-items: center;
  font-size: 9px;
  letter-spacing: -0.1px;
  color: #555;
  border-top: 1px solid #e4e3e1;
  box-sizing: border-box;
  padding-left: 5px;
}

.st-save {
  width: 14px;
  flex-shrink: 0;
}

.st {
  box-sizing: border-box;
  height: 17px;
  line-height: 16px;
  border-right: 1px solid #e0dfdd;
  flex-shrink: 0;
}

.st-sheet {
  width: 170px;
  padding-left: 8px;
}

.st-page {
  width: 394px;
  padding-left: 172px;
}

.st-lang {
  width: 179px;
  padding-left: 65px;
}

.st-blank {
  width: 47px;
}

.st-mode {
  width: 29px;
  display: flex;
  align-items: center;
  padding-left: 6px;
}

.selrect {
  width: 12px;
  height: 7px;
  box-sizing: border-box;
  border: 1px solid #4a8ec4;
  background: #dcebf6;
}

.ibeam {
  width: 1px;
  height: 11px;
  margin-left: 3px;
  background: #333;
}

.st-a,
.st-b {
  width: 20px;
}

.st-sum {
  width: 193px;
  padding-left: 66px;
}

.st-zoom {
  width: 94px;
  display: flex;
  align-items: center;
  gap: 5px;
  padding-left: 6px;
  border-right: none;
}

.zm {
  font-size: 12px;
  font-weight: 700;
  color: #444;
}

.track {
  position: relative;
  width: 63px;
  height: 1px;
  background: #888;
}

.knob {
  position: absolute;
  left: 29px;
  top: -3px;
  width: 3px;
  height: 7px;
  border: 1px solid #555;
  background: #eee;
  box-sizing: border-box;
}

.st-pct {
  font-size: 9.5px;
  margin-left: 8px;
}
</style>
